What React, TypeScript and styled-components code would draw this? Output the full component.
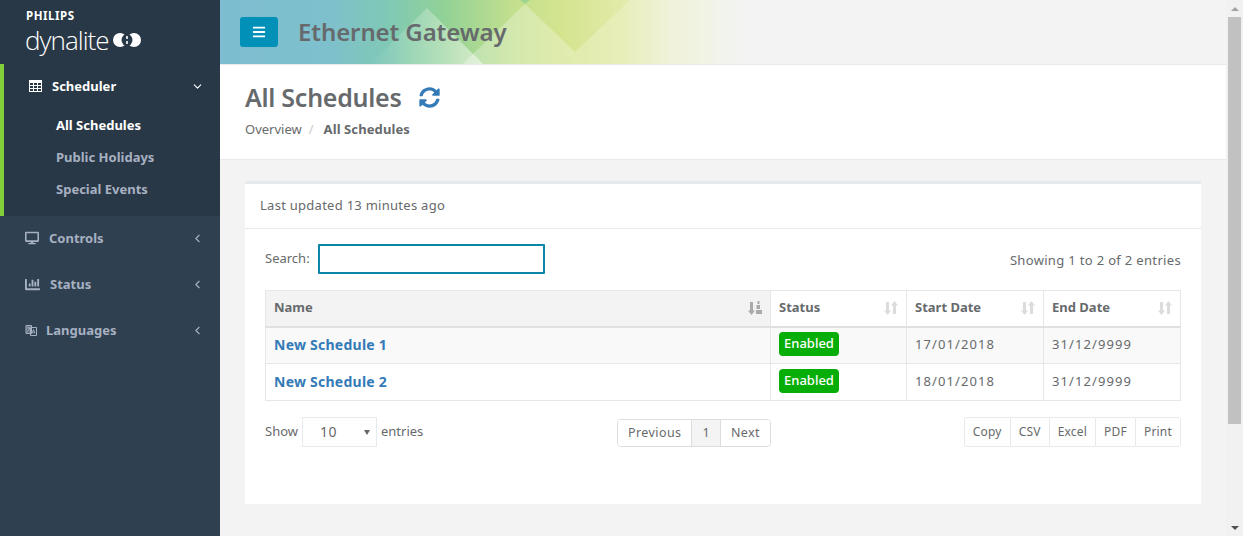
import { FC } from "react";
import styled, { createGlobalStyle } from "styled-components";
import { ChevronDown, ChevronLeft } from "lucide-react";
import { FaBars, FaChartBar, FaDesktop, FaSyncAlt } from "react-icons/fa";

const GlobalStyle = createGlobalStyle`
  html, body {
    margin: 0;
    height: 100%;
    overflow: hidden;
    background: #f3f3f4;
    font-family: "Noto Sans", "Open Sans", sans-serif;
    font-size: 13px;
    color: #676a6c;
  }
  * { box-sizing: border-box; }
`;

const Shell = styled.div`
  display: flex;
  width: 1243px;
  height: 536px;
  overflow: hidden;
`;

const Sidebar = styled.aside`
  width: 220px;
  flex: none;
  background: #2f4050;
  font-weight: 700;
`;

const Logo = styled.div`
  height: 64px;
  padding: 10px 0 0 26px;
  background: #293846;
  color: #fff;
`;

const LogoBrand = styled.div`
  font-size: 11.5px;
  line-height: 12px;
  letter-spacing: 0.55px;
  font-weight: 700;
`;

const LogoRow = styled.div`
  display: flex;
  align-items: center;
  gap: 4px;
  margin: 3px 0 0 -1px;
`;

const LogoWord = styled.span`
  font-family: "Open Sans", sans-serif;
  font-size: 26px;
  line-height: 30px;
  font-weight: 300;
  letter-spacing: -0.95px;
`;

const ActiveGroup = styled.div`
  height: 152px;
  background: #293846;
  border-left: 4px solid #84cf3c;
`;

const NavItem = styled.div<{ $active?: boolean; $gap?: number }>`
  display: flex;
  align-items: center;
  height: 46px;
  padding: 0 16px 2px 25px;
  gap: ${(p) => p.$gap ?? 10}px;
  color: ${(p) => (p.$active ? "#fff" : "#a7b1c2")};
  svg:first-child { flex: none; }
`;

const NavLabel = styled.span`
  flex: 1;
`;

const SubItem = styled.div<{ $active?: boolean }>`
  height: 32px;
  line-height: 30px;
  padding-left: 52px;
  color: ${(p) => (p.$active ? "#fff" : "#a7b1c2")};
`;

const Main = styled.main`
  flex: 1;
  min-width: 0;
`;

const TopBar = styled.header`
  position: relative;
  display: flex;
  align-items: center;
  gap: 20px;
  height: 65px;
  padding: 0 0 1px 20px;
  border-bottom: 1px solid #e7eaec;
  overflow: hidden;
  background: linear-gradient(90deg, #7ebdd1 0, #7ec0cc 110px, #80c9b4 170px, #92d296 225px, #c4e08e 295px, #d3e48e 340px, #e2eaa8 400px, #eef1d4 450px, #f3f3f4 525px);
`;

const TopArt = styled.svg`
  position: absolute;
  left: 0;
  top: 0;
`;

const MenuButton = styled.button`
  position: relative;
  width: 38px;
  height: 30px;
  padding: 0;
  border: 0;
  border-radius: 3px;
  background: #0090b8;
  color: #fff;
  display: flex;
  align-items: center;
  justify-content: center;
`;

const AppTitle = styled.h1`
  position: relative;
  margin: 0;
  font-size: 24px;
  line-height: 30px;
  font-weight: 600;
  letter-spacing: -0.1px;
  color: #676a6c;
`;

const TitleBar = styled.section`
  height: 95px;
  padding: 14px 25px 0;
  background: #fff;
  border-bottom: 1px solid #e7eaec;
`;

const TitleRow = styled.div`
  display: flex;
  align-items: center;
  gap: 18px;
  height: 36px;
`;

const PageTitle = styled.h2`
  margin: 0;
  font-size: 25px;
  line-height: 36px;
  font-weight: 600;
  letter-spacing: -0.27px;
`;

const Crumbs = styled.div`
  display: flex;
  margin-top: 3px;
  line-height: 22px;
`;

const CrumbSep = styled.span`
  margin: 0 10px 0 7px;
  color: #ccc;
`;

const CrumbCurrent = styled.strong`
  letter-spacing: 0.1px;
`;

const Content = styled.div`
  padding: 21px 25px 0;
`;

const Card = styled.section`
  height: 323px;
  background: #fff;
  border-top: 3px solid #e7eaec;
`;

const CardHead = styled.div`
  height: 45px;
  padding: 0 15px;
  line-height: 43px;
  letter-spacing: 0.27px;
  border-bottom: 1px solid #e7eaec;
`;

const CardBody = styled.div`
  padding: 15px 20px 0;
`;

const TableTop = styled.div`
  display: flex;
  align-items: center;
  justify-content: space-between;
  height: 30px;
  margin-bottom: 16px;
`;

const SearchBox = styled.label`
  display: flex;
  align-items: center;
  gap: 8px;
  line-height: 28px;
`;

const SearchText = styled.span`
  margin-top: -2px;
`;

const EntryCount = styled.span`
  margin-top: 2px;
  letter-spacing: 0.33px;
`;

const SearchInput = styled.input`
  width: 227px;
  height: 30px;
  padding: 0 8px;
  border: 2px solid #0b86a8;
  border-radius: 1px;
  outline: none;
  background: #fff;
`;

const Grid = styled.table`
  width: 100%;
  table-layout: fixed;
  border-collapse: collapse;
`;

const HeadCell = styled.th<{ $width?: number; $sorted?: boolean }>`
  position: relative;
  width: ${(p) => (p.$width ? `${p.$width}px` : "auto")};
  height: 36px;
  padding: 0 8px 2px;
  text-align: left;
  font-weight: 700;
  border: 1px solid #e7e7e7;
  border-bottom: 2px solid #e0e0e0;
  background: ${(p) => (p.$sorted ? "#f3f3f3" : "#fff")};
`;

const SortIcon = styled.svg<{ $sorted?: boolean }>`
  position: absolute;
  right: 8px;
  top: 10px;
  fill: ${(p) => (p.$sorted ? "#aaa" : "#dcdcdc")};
`;

const Row = styled.tr<{ $striped?: boolean }>`
  background: ${(p) => (p.$striped ? "#f9f9f9" : "#fff")};
`;

const Cell = styled.td`
  height: 37px;
  padding: 0 8px 2px;
  border: 1px solid #e7e7e7;
  letter-spacing: 1.1px;
`;

const NameLink = styled.a`
  color: #337ab7;
  font-size: 14px;
  font-weight: 700;
  letter-spacing: 0.25px;
`;

const Badge = styled.span`
  display: inline-block;
  height: 24px;
  padding: 0 5px;
  line-height: 23px;
  border-radius: 4px;
  background: #07ae07;
  color: #fff;
  font-weight: 500;
  letter-spacing: 0;
`;

const TableFoot = styled.div`
  display: grid;
  grid-template-columns: 506px 1fr;
  margin-top: 16px;
`;

const FootLeft = styled.div`
  display: flex;
  justify-content: space-between;
`;

const LengthBox = styled.div`
  display: flex;
  align-items: center;
  gap: 4px;
  height: 30px;
  padding-bottom: 2px;
`;

const FakeSelect = styled.div`
  position: relative;
  width: 75px;
  height: 30px;
  margin-bottom: -2px;
  padding-left: 17px;
  border: 1px solid #e7eaec;
  font-size: 14px;
  line-height: 28px;
  letter-spacing: 0.5px;
  &::after {
    content: "";
    position: absolute;
    right: 6px;
    top: 12px;
    border: 3.5px solid transparent;
    border-top: 5px solid #666;
    border-bottom: 0;
  }
`;

const Pager = styled.div`
  display: flex;
  height: 28px;
  margin-top: 2px;
  border: 1px solid #ddd;
  border-radius: 4px;
  overflow: hidden;
`;

const PageButton = styled.div<{ $current?: boolean }>`
  padding: 0 10px;
  line-height: 26px;
  font-size: 12.5px;
  letter-spacing: 0.4px;
  background: ${(p) => (p.$current ? "#f4f4f4" : "#fff")};
  & + & { border-left: 1px solid #ddd; }
`;

const ExportGroup = styled.div`
  justify-self: end;
  display: flex;
  height: 30px;
  border: 1px solid #e7eaec;
  border-radius: 3px;
`;

const ExportButton = styled.div`
  padding: 0 8px;
  font-size: 12px;
  line-height: 28px;
  letter-spacing: 0.2px;
  & + & { border-left: 1px solid #e7eaec; }
`;

const Scrollbar = styled.div`
  width: 17px;
  flex: none;
  display: flex;
  flex-direction: column;
  background: #f1f1f1;
`;

const ScrollArrow = styled.div<{ $down?: boolean }>`
  height: 17px;
  flex: none;
  display: flex;
  align-items: center;
  justify-content: center;
  &::after {
    content: "";
    border: 4px solid transparent;
    ${(p) => (p.$down ? "border-top: 4px solid #505050; border-bottom: 0;" : "border-bottom: 4px solid #a3a3a3; border-top: 0;")}
  }
`;

const ScrollTrack = styled.div`
  flex: 1;
  padding: 0 2px;
`;

const ScrollThumb = styled.div`
  height: 407px;
  background: #c1c1c1;
`;

const DynaliteMark: FC = () => (
  <svg width="28" height="14" viewBox="0 0 28 14">
    <circle cx="7" cy="7" r="7" fill="#fff" />
    <circle cx="21" cy="7" r="7" fill="#fff" />
    <ellipse cx="14" cy="7" rx="5.500" ry="6" fill="#293846" />
    <rect x="13.200" y="3" width="1.600" height="3" fill="#fff" />
    <rect x="13.200" y="8" width="1.600" height="3" fill="#fff" />
  </svg>
);

// fa-table: header bar over a 3 x 3 grid of cells
const TableGlyph: FC = () => (
  <svg width="13" height="12" viewBox="0 0 13 12" fill="currentColor">
    <path d="M0 0h13v12H0zM1 3v2h3V3zm4 0v2h3V3zm4 0v2h3V3zM1 6v2h3V6zm4 0v2h3V6zm4 0v2h3V6zM1 9v2h3V9zm4 0v2h3V9zm4 0v2h3V9z" fillRule="evenodd" />
  </svg>
);

const LanguageGlyph: FC = () => (
  <svg width="12" height="14" viewBox="0 0 12 14" fill="none" stroke="currentColor">
    <path d="M1 2.500h5.500v8H1z" fill="currentColor" fillOpacity="0.45" />
    <path d="M5.500 4.500h6v8h-6z" />
    <path d="M7 10.500l1.500-4 1.500 4M7.600 9.200h1.800" strokeWidth="0.9" />
    <path d="M2 5h3M3.500 4v1M2.400 8.500c1.200-.6 2-1.800 2.300-3.500" strokeWidth="0.8" />
  </svg>
);

const SortPair: FC = () => (
  <SortIcon width="14" height="14" viewBox="0 0 14 14">
    <path d="M2 1h3v8.500h2L3.500 14 0 9.500h2z" />
    <path d="M9 13h3V4.500h2L10.500 0 7 4.500h2z" />
  </SortIcon>
);

const SortedAsc: FC = () => (
  <SortIcon $sorted width="14" height="14" viewBox="0 0 14 14">
    <path d="M2 1h3v8.500h2L3.500 14 0 9.500h2z" />
    <path d="M9.500 0h2v3h-2zM8.500 4h3.500v4H8.500zM8 9h6v4H8z" />
  </SortIcon>
);

const HeaderArt: FC = () => (
  <TopArt width="560" height="64" viewBox="0 0 560 64">
    <defs>
      <linearGradient id="leftFade" x1="0" x2="1" y1="0" y2="0">
        <stop offset="0" stopColor="#fff" stopOpacity="0" />
        <stop offset="1" stopColor="#fff" stopOpacity="0.5" />
      </linearGradient>
      <linearGradient id="rightFade" x1="0" x2="1" y1="0" y2="0">
        <stop offset="0" stopColor="#fff" stopOpacity="0.24" />
        <stop offset="1" stopColor="#fff" stopOpacity="0" />
      </linearGradient>
    </defs>
    <path d="M150 64 L207 8 L263 64 Z" fill="url(#leftFade)" />
    <path d="M243 64 L255 52 L267 64 Z" fill="#fff" opacity="0.3" />
    <path d="M305 4 L355 52 L343 64 H267 L255 52 Z" fill="#fff" opacity="0.28" />
    <path d="M355 52 L410 0 H540 V64 H367 Z" fill="url(#rightFade)" />
    <path d="M343 64 L355 52 L367 64 Z" fill="#fff" opacity="0.25" />
    <path d="M300 0 H310 L305 4 Z" fill="#9fd48f" />
  </TopArt>
);

const App: FC = () => (
  <Shell>
    <GlobalStyle />
    <Sidebar>
      <Logo>
        <LogoBrand>PHILIPS</LogoBrand>
        <LogoRow>
          <LogoWord>dynalite</LogoWord>
          <DynaliteMark />
        </LogoRow>
      </Logo>
      <ActiveGroup>
        <NavItem $active $gap={10}>
          <TableGlyph />
          <NavLabel>Scheduler</NavLabel>
          <ChevronDown size={13} strokeWidth={2} />
        </NavItem>
        <div>
          <SubItem $active>All Schedules</SubItem>
          <SubItem>Public Holidays</SubItem>
          <SubItem>Special Events</SubItem>
        </div>
      </ActiveGroup>
      <NavItem $gap={10}>
        <FaDesktop size={14} />
        <NavLabel>Controls</NavLabel>
        <ChevronLeft size={13} strokeWidth={2} />
      </NavItem>
      <NavItem $gap={10}>
        <FaChartBar size={15} />
        <NavLabel>Status</NavLabel>
        <ChevronLeft size={13} strokeWidth={2} />
      </NavItem>
      <NavItem $gap={9}>
        <LanguageGlyph />
        <NavLabel>Languages</NavLabel>
        <ChevronLeft size={13} strokeWidth={2} />
      </NavItem>
    </Sidebar>

    <Main>
      <TopBar>
        <HeaderArt />
        <MenuButton aria-label="menu">
          <FaBars size={14} />
        </MenuButton>
        <AppTitle>Ethernet Gateway</AppTitle>
      </TopBar>

      <TitleBar>
        <TitleRow>
          <PageTitle>All Schedules</PageTitle>
          <FaSyncAlt size={21} color="#337ab7" />
        </TitleRow>
        <Crumbs>
          Overview
          <CrumbSep>/</CrumbSep>
          <CrumbCurrent>All Schedules</CrumbCurrent>
        </Crumbs>
      </TitleBar>

      <Content>
        <Card>
          <CardHead>Last updated 13 minutes ago</CardHead>
          <CardBody>
            <TableTop>
              <SearchBox>
                <SearchText>Search:</SearchText>
                <SearchInput />
              </SearchBox>
              <EntryCount>Showing 1 to 2 of 2 entries</EntryCount>
            </TableTop>
            <Grid>
              <thead>
                <tr>
                  <HeadCell $sorted>
                    Name
                    <SortedAsc />
                  </HeadCell>
                  <HeadCell $width={136}>
                    Status
                    <SortPair />
                  </HeadCell>
                  <HeadCell $width={137}>
                    Start Date
                    <SortPair />
                  </HeadCell>
                  <HeadCell $width={137}>
                    End Date
                    <SortPair />
                  </HeadCell>
                </tr>
              </thead>
              <tbody>
                <Row $striped>
                  <Cell><NameLink>New Schedule 1</NameLink></Cell>
                  <Cell><Badge>Enabled</Badge></Cell>
                  <Cell>17/01/2018</Cell>
                  <Cell>31/12/9999</Cell>
                </Row>
                <Row>
                  <Cell><NameLink>New Schedule 2</NameLink></Cell>
                  <Cell><Badge>Enabled</Badge></Cell>
                  <Cell>18/01/2018</Cell>
                  <Cell>31/12/9999</Cell>
                </Row>
              </tbody>
            </Grid>
            <TableFoot>
              <FootLeft>
                <LengthBox>
                  Show
                  <FakeSelect>10</FakeSelect>
                  entries
                </LengthBox>
                <Pager>
                  <PageButton>Previous</PageButton>
                  <PageButton $current>1</PageButton>
                  <PageButton>Next</PageButton>
                </Pager>
              </FootLeft>
              <ExportGroup>
                <ExportButton>Copy</ExportButton>
                <ExportButton>CSV</ExportButton>
                <ExportButton>Excel</ExportButton>
                <ExportButton>PDF</ExportButton>
                <ExportButton>Print</ExportButton>
              </ExportGroup>
            </TableFoot>
          </CardBody>
        </Card>
      </Content>
    </Main>

    <Scrollbar>
      <ScrollArrow />
      <ScrollTrack>
        <ScrollThumb />
      </ScrollTrack>
      <ScrollArrow $down />
    </Scrollbar>
  </Shell>
);

export default App;
